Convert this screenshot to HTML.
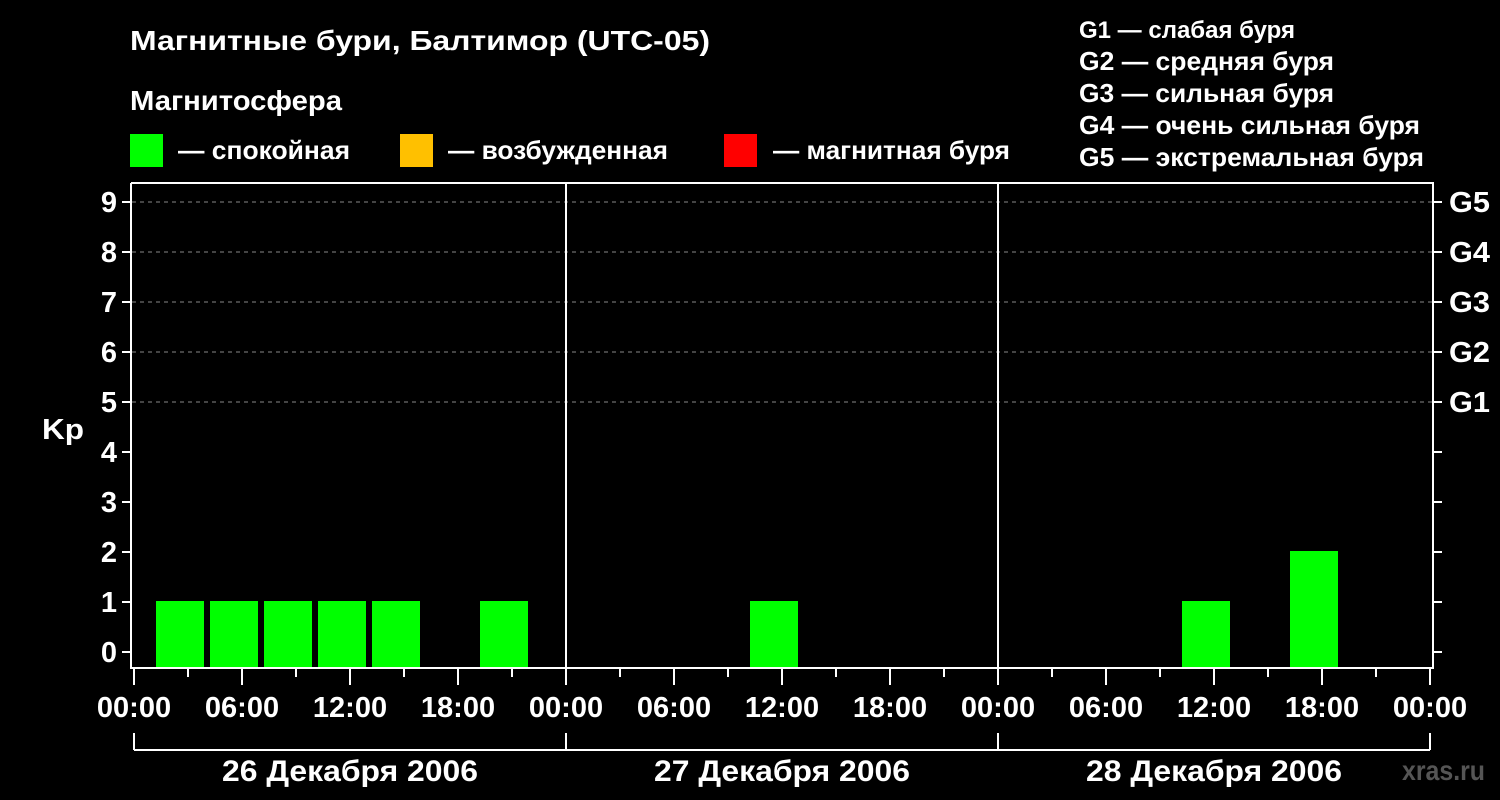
<!DOCTYPE html><html><head><style>body{margin:0;background:#000}svg{display:block}text{font-family:"Liberation Sans",Arial,sans-serif;font-weight:bold;fill:#fff}</style></head><body>
<svg width="1500" height="800" viewBox="0 0 1500 800">
<rect width="1500" height="800" fill="#000"/>
<text x="130" y="50" font-size="28" textLength="580" lengthAdjust="spacingAndGlyphs">Магнитные бури, Балтимор (UTC-05)</text>
<text x="130" y="110" font-size="28" textLength="212" lengthAdjust="spacingAndGlyphs">Магнитосфера</text>
<rect x="130" y="134" width="33" height="33" fill="#00ff00"/><text x="178" y="159" font-size="26" textLength="172" lengthAdjust="spacingAndGlyphs">— спокойная</text>
<rect x="400" y="134" width="33" height="33" fill="#ffc000"/><text x="448" y="159" font-size="26" textLength="220" lengthAdjust="spacingAndGlyphs">— возбужденная</text>
<rect x="724" y="134" width="33" height="33" fill="#ff0000"/><text x="773" y="159" font-size="26" textLength="237" lengthAdjust="spacingAndGlyphs">— магнитная буря</text>
<g font-size="26"><text x="1079" y="38" font-size="24">G1 — слабая буря</text><text x="1079" y="70" textLength="255" lengthAdjust="spacingAndGlyphs">G2 — средняя буря</text><text x="1079" y="102" textLength="255" lengthAdjust="spacingAndGlyphs">G3 — сильная буря</text><text x="1079" y="134" textLength="341" lengthAdjust="spacingAndGlyphs">G4 — очень сильная буря</text><text x="1079" y="166" textLength="345" lengthAdjust="spacingAndGlyphs">G5 — экстремальная буря</text></g>
<g stroke="#888" stroke-dasharray="4,4" stroke-width="1"><line x1="132" x2="1432" y1="202" y2="202"/><line x1="132" x2="1432" y1="252" y2="252"/><line x1="132" x2="1432" y1="302" y2="302"/><line x1="132" x2="1432" y1="352" y2="352"/><line x1="132" x2="1432" y1="402" y2="402"/></g>
<g fill="#00ff00"><rect x="156" y="601" width="48" height="67"/><rect x="210" y="601" width="48" height="67"/><rect x="264" y="601" width="48" height="67"/><rect x="318" y="601" width="48" height="67"/><rect x="372" y="601" width="48" height="67"/><rect x="480" y="601" width="48" height="67"/><rect x="750" y="601" width="48" height="67"/><rect x="1182" y="601" width="48" height="67"/><rect x="1290" y="551" width="48" height="117"/></g>
<g stroke="#fff" stroke-width="2" fill="none">
<polyline points="131,183 131,668 1433,668 1433,183 131,183"/>
<line x1="566" y1="183" x2="566" y2="668"/><line x1="998" y1="183" x2="998" y2="668"/>
<path d="M122 202h9M122 252h9M122 302h9M122 352h9M122 402h9M122 452h9M122 502h9M122 552h9M122 602h9M122 652h9"/>
<path d="M1433 202h9M1433 252h9M1433 302h9M1433 352h9M1433 402h9M1433 452h9M1433 502h9M1433 552h9M1433 602h9M1433 652h9"/>
<path d="M134 668v17M242 668v17M350 668v17M458 668v17M566 668v17M674 668v17M782 668v17M890 668v17M998 668v17M1106 668v17M1214 668v17M1322 668v17M1430 668v17"/>
<path d="M188 668v9M296 668v9M404 668v9M512 668v9M620 668v9M728 668v9M836 668v9M944 668v9M1052 668v9M1160 668v9M1268 668v9M1376 668v9"/>
<path d="M134 733v17M566 733v17M998 733v17M1430 733v17M134 750H1430"/>
</g>
<g font-size="29" text-anchor="end"><text x="117" y="212">9</text><text x="117" y="262">8</text><text x="117" y="312">7</text><text x="117" y="362">6</text><text x="117" y="412">5</text><text x="117" y="462">4</text><text x="117" y="512">3</text><text x="117" y="562">2</text><text x="117" y="612">1</text><text x="117" y="662">0</text></g>
<text x="42" y="439" font-size="29" textLength="42" lengthAdjust="spacingAndGlyphs">Kp</text>
<g font-size="29"><text x="1449" y="212" textLength="41" lengthAdjust="spacingAndGlyphs">G5</text><text x="1449" y="262" textLength="41" lengthAdjust="spacingAndGlyphs">G4</text><text x="1449" y="312" textLength="41" lengthAdjust="spacingAndGlyphs">G3</text><text x="1449" y="362" textLength="41" lengthAdjust="spacingAndGlyphs">G2</text><text x="1449" y="412" textLength="41" lengthAdjust="spacingAndGlyphs">G1</text></g>
<g font-size="29" text-anchor="middle"><text x="134" y="717">00:00</text><text x="242" y="717">06:00</text><text x="350" y="717">12:00</text><text x="458" y="717">18:00</text><text x="566" y="717">00:00</text><text x="674" y="717">06:00</text><text x="782" y="717">12:00</text><text x="890" y="717">18:00</text><text x="998" y="717">00:00</text><text x="1106" y="717">06:00</text><text x="1214" y="717">12:00</text><text x="1322" y="717">18:00</text><text x="1430" y="717">00:00</text></g>
<g font-size="30"><text x="222" y="781" textLength="256" lengthAdjust="spacingAndGlyphs">26 Декабря 2006</text><text x="654" y="781" textLength="256" lengthAdjust="spacingAndGlyphs">27 Декабря 2006</text><text x="1086" y="781" textLength="256" lengthAdjust="spacingAndGlyphs">28 Декабря 2006</text></g>
<text x="1402" y="780" font-size="28" textLength="83" lengthAdjust="spacingAndGlyphs" style="fill:#555">xras.ru</text>
</svg></body></html>
